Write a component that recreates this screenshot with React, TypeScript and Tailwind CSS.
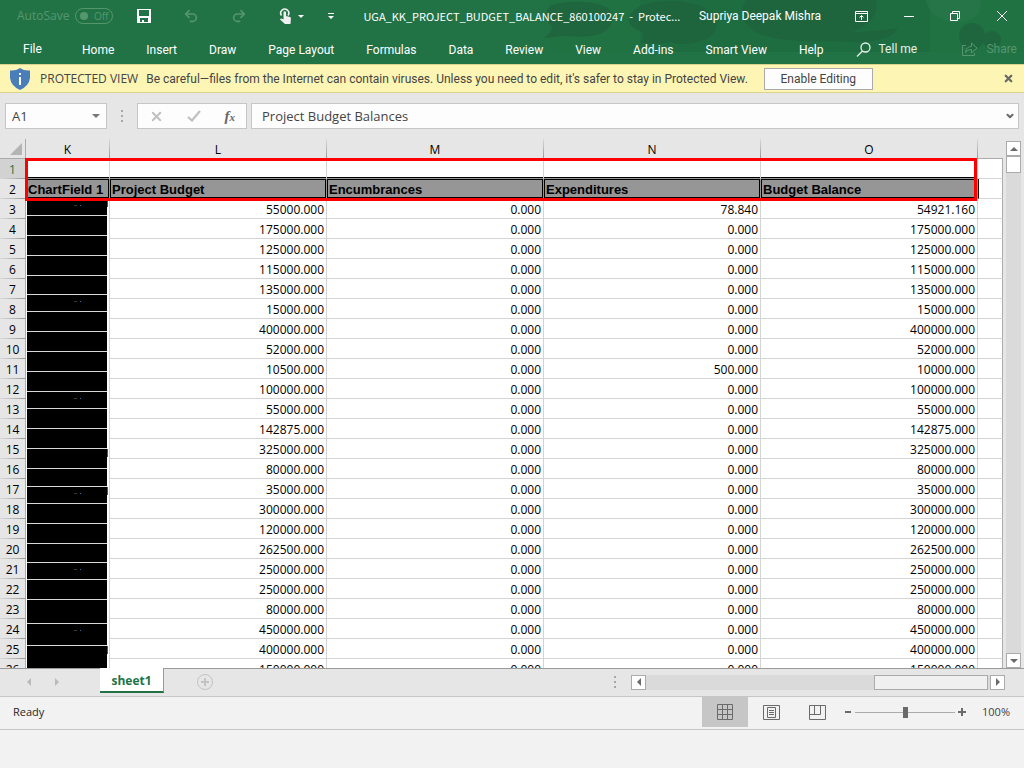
import { ChevronDown, Redo2, Undo2, X } from "lucide-react";

const tabs = [
  "Home",
  "Insert",
  "Draw",
  "Page Layout",
  "Formulas",
  "Data",
  "Review",
  "View",
  "Add-ins",
  "Smart View",
  "Help",
];

const columns = ["K", "L", "M", "N", "O"];
const headings = [
  "ChartField 1",
  "Project Budget",
  "Encumbrances",
  "Expenditures",
  "Budget Balance",
];

// budget, encumbrances, expenditures, balance
const rows = [
  ["55000.000", "0.000", "78.840", "54921.160"],
  ["175000.000", "0.000", "0.000", "175000.000"],
  ["125000.000", "0.000", "0.000", "125000.000"],
  ["115000.000", "0.000", "0.000", "115000.000"],
  ["135000.000", "0.000", "0.000", "135000.000"],
  ["15000.000", "0.000", "0.000", "15000.000"],
  ["400000.000", "0.000", "0.000", "400000.000"],
  ["52000.000", "0.000", "0.000", "52000.000"],
  ["10500.000", "0.000", "500.000", "10000.000"],
  ["100000.000", "0.000", "0.000", "100000.000"],
  ["55000.000", "0.000", "0.000", "55000.000"],
  ["142875.000", "0.000", "0.000", "142875.000"],
  ["325000.000", "0.000", "0.000", "325000.000"],
  ["80000.000", "0.000", "0.000", "80000.000"],
  ["35000.000", "0.000", "0.000", "35000.000"],
  ["300000.000", "0.000", "0.000", "300000.000"],
  ["120000.000", "0.000", "0.000", "120000.000"],
  ["262500.000", "0.000", "0.000", "262500.000"],
  ["250000.000", "0.000", "0.000", "250000.000"],
  ["250000.000", "0.000", "0.000", "250000.000"],
  ["80000.000", "0.000", "0.000", "80000.000"],
  ["450000.000", "0.000", "0.000", "450000.000"],
  ["400000.000", "0.000", "0.000", "400000.000"],
  ["150000.000", "0.000", "0.000", "150000.000"],
];

// heights of the blacked out strips in column K, top to bottom
const redacted = [
  16, 19, 19, 19, 18, 16, 19, 19, 19, 19, 16, 19, 19, 19, 17, 16, 19, 19, 18,
  16, 19, 23, 21, 30,
];
const specked = [0, 5, 10, 15, 19, 22];
// strips whose covered text sticks out on the right
const peeking = [0, 13, 15, 23];

function HeaderArt() {
  return (
    <svg
      className="pointer-events-none absolute top-0 right-0 h-[52px] w-[494px]"
      viewBox="0 0 494 52"
      aria-hidden="true"
    >
      <rect x="20" width="474" height="52" fill="#20703f" opacity="0.35" />
      <rect x="110" width="290" height="52" fill="#1e643d" opacity="0.35" />
      <g fill="#1f623d" opacity="0.7">
        <path d="M20 6c14-6 44-6 58 2 8 8 6 20-8 26-14 4-26 2-36 2-8 0-12 2-20 2 4-4 8-6 8-12C14 20 14 12 20 6z" />
        <path d="M104 10c14-12 56-12 74 0 14 10 10 24-4 30-12 5-24 5-34 2-10 2-22 2-30 0 4-4 4-6 2-10-16-6-16-14-8-22z" />
        <path d="M216 0h130c4 14-8 26-24 32 14 0 32-2 46-4-4 10-22 14-44 14-30-2-60 2-88-6-24-6-28-24-20-36z" />
        <circle cx="442" cy="36" r="13" />
        <circle cx="462" cy="40" r="9" />
      </g>
      <path
        d="M396 0h54c4 10-4 20-20 22s-32-8-34-22z"
        fill="#2a784c"
        opacity="0.6"
      />
    </svg>
  );
}

function SaveIcon() {
  return (
    <svg width="14" height="14" viewBox="0 0 14 14" aria-hidden="true">
      <path
        fillRule="evenodd"
        fill="#fff"
        d="M0 0h14v14H0zM2 1v6h10V1zM3 9v4h2v-2h2v2h4V9z"
      />
    </svg>
  );
}

function TouchIcon() {
  return (
    <svg width="14" height="17" viewBox="0 0 14 17" aria-hidden="true">
      <path
        d="M2.500 7.500a4 4 0 1 1 6.500 0"
        fill="none"
        stroke="#f0f0f0"
        strokeWidth="1.600"
      />
      <path
        fill="#f0f0f0"
        d="M4.500 4.500a1.300 1.300 0 0 1 2.600 0V8l3.900 1q1 .3.900 1.500L11.500 16H6L1 11.500q.5-1.500 2-.8l1.500.8z"
      />
    </svg>
  );
}

function SearchIcon() {
  return (
    <svg
      width="15"
      height="15"
      viewBox="0 0 15 15"
      fill="none"
      stroke="currentColor"
      strokeWidth="1.300"
      aria-hidden="true"
    >
      <circle cx="9.500" cy="5.500" r="4.500" />
      <path d="M6.500 9L1 14.500" />
    </svg>
  );
}

function ShieldIcon() {
  return (
    <svg width="20" height="22" viewBox="0 0 20 22" aria-hidden="true">
      <path
        d="M10 0q4 3 10 2.500V10q-1 8-10 12Q1 18 0 10V2.500Q6 3 10 0z"
        fill="#4a7ebb"
      />
      <path d="M9 5h2v2H9zM9 9h2v8H9z" fill="#fff" />
    </svg>
  );
}

function ShareIcon() {
  return (
    <svg
      width="16"
      height="14"
      viewBox="0 0 16 14"
      fill="none"
      stroke="currentColor"
      aria-hidden="true"
    >
      <path d="M4 3.500H.5v10h12V11" />
      <path d="M3.500 10.500q.5-6 6-6V1l5.500 5-5.500 5V7.500q-4 0-6 3z" />
    </svg>
  );
}

function Triangle({ dir }: { dir: "up" | "down" | "left" | "right" }) {
  const points = {
    up: "0,6 8,6 4,2",
    down: "0,2 8,2 4,6",
    left: "6,0 6,8 2,4",
    right: "2,0 2,8 6,4",
  };
  return (
    <svg width="8" height="8" viewBox="0 0 8 8" aria-hidden="true">
      <polygon points={points[dir]} fill="currentColor" />
    </svg>
  );
}

function Grip() {
  return (
    <div className="flex flex-col gap-[3px]">
      <span className="size-[2px] bg-[#a6a6a6]" />
      <span className="size-[2px] bg-[#a6a6a6]" />
      <span className="size-[2px] bg-[#a6a6a6]" />
    </div>
  );
}

function TitleBar() {
  return (
    <div className="relative flex h-8 items-center pr-4 pl-[17px]">
      <label className="flex items-center gap-[6px] text-[#56966f]">
        AutoSave
        <button
          role="switch"
          aria-checked="false"
          aria-label="AutoSave"
          className="flex h-4 w-[38px] items-center justify-between rounded-full border border-[#56966f] px-1 text-[10px]"
        >
          <span className="size-2 rounded-full bg-[#56966f]" />
          Off
        </button>
      </label>
      <button aria-label="Save" className="ml-6">
        <SaveIcon />
      </button>
      <button aria-label="Undo" className="ml-8 text-[#56966f]">
        <Undo2 size={16} strokeWidth={2.5} />
      </button>
      <button aria-label="Redo" className="ml-8 text-[#56966f]">
        <Redo2 size={16} strokeWidth={2.5} />
      </button>
      <button
        aria-label="Touch mode"
        className="ml-8 flex items-center gap-[5px]"
      >
        <TouchIcon />
        <svg width="6" height="3" viewBox="0 0 6 3">
          <path d="M0 0h6L3 3z" fill="#fff" />
        </svg>
      </button>
      <button aria-label="Customize toolbar" className="ml-6">
        <svg width="6" height="6" viewBox="0 0 6 6">
          <path d="M0 0h6v1H0zM0 3h6L3 6z" fill="#fff" />
        </svg>
      </button>
      <div className="min-w-0 flex-1 pl-[29px] font-['Noto_Sans_CJK_SC','Open_Sans',sans-serif] text-[11px] whitespace-pre">
        UGA_KK_PROJECT_BUDGET_BALANCE_860100247{"  -  "}Protec...
      </div>
      <span className="font-[Roboto,sans-serif] whitespace-nowrap">
        Supriya Deepak Mishra
      </span>
      <button aria-label="Ribbon display options" className="ml-[34px]">
        <svg width="13" height="11" viewBox="0 0 13 11" fill="none" stroke="#fff">
          <path d="M.5.5h12v10H.5zM.5 2.500h12M6.500 9V4.500M4.500 6.500l2-2 2 2" />
        </svg>
      </button>
      <button aria-label="Minimize" className="ml-9">
        <svg width="10" height="10" viewBox="0 0 10 10">
          <path d="M0 5.500h10" stroke="#fff" />
        </svg>
      </button>
      <button aria-label="Restore" className="ml-9">
        <svg width="10" height="10" viewBox="0 0 10 10" fill="none" stroke="#fff">
          <path d="M.5 2.500h7v7h-7zM2.500 2.500v-2h7v7h-2" />
        </svg>
      </button>
      <button aria-label="Close" className="ml-9">
        <svg width="12" height="10" viewBox="0 0 12 10" stroke="#fff">
          <path d="M1 0l10 10M11 0L1 10" />
        </svg>
      </button>
    </div>
  );
}

function Ribbon() {
  return (
    <nav className="relative flex h-8 items-center pt-[2px] pr-[7px] pl-[23px] font-[Roboto,sans-serif] whitespace-nowrap">
      <button className="w-[59px] text-left">File</button>
      <div className="flex gap-8 pt-px">
        {tabs.map((tab) => (
          <button key={tab}>{tab}</button>
        ))}
      </div>
      <button className="ml-8 flex items-center gap-2 text-white/90">
        <SearchIcon />
        Tell me
      </button>
      <button className="ml-auto flex items-center gap-2 text-[#56966f]">
        <ShareIcon />
        Share
      </button>
    </nav>
  );
}

function MessageBar() {
  return (
    <div className="flex h-[29px] items-center border-y border-[#d9d38b] bg-[#fcf5b4] px-[10px] whitespace-nowrap text-[#444]">
      <ShieldIcon />
      <span className="ml-[10px]">PROTECTED VIEW</span>
      <p className="ml-2 font-[Roboto,sans-serif]">
        Be careful—files from the Internet can contain viruses. Unless you need
        to edit, it's safer to stay in Protected View.
      </p>
      <button className="ml-4 h-[22px] w-[109px] border border-[#ababab] bg-[#fdfdfd] font-[Roboto,sans-serif]">
        Enable Editing
      </button>
      <button aria-label="Close message bar" className="ml-auto text-[#6a6a6a]">
        <X size={11} strokeWidth={5} />
      </button>
    </div>
  );
}

function FormulaBar() {
  return (
    <div className="flex h-[46px] items-center gap-1 px-[5px] text-[13px] text-[#444]">
      <div className="flex h-[26px] w-[102px] items-center border border-[#c6c6c6] bg-[#fdfdfd] px-[6px]">
        <input
          aria-label="Name box"
          defaultValue="A1"
          className="min-w-0 flex-1 bg-transparent pt-[2px] outline-none"
        />
        <span className="text-[#777]">
          <Triangle dir="down" />
        </span>
      </div>
      <div className="flex w-[22px] justify-center">
        <Grip />
      </div>
      <div className="flex h-[26px] w-[110px] items-center justify-between border border-[#c6c6c6] bg-[#fdfdfd] px-[11px]">
        <button aria-label="Cancel" className="text-[#c0c0c0]">
          <X size={15} strokeWidth={3} />
        </button>
        <button aria-label="Enter">
          <svg width="14" height="12" viewBox="0 0 14 12" fill="none">
            <path d="M1 7l4 3.500L13 1" stroke="#c0c0c0" strokeWidth="2.200" />
          </svg>
        </button>
        <button
          aria-label="Insert function"
          className="font-['Liberation_Serif',serif] text-[15px] leading-4 font-bold text-[#666] italic"
        >
          f<span className="text-[11px]">x</span>
        </button>
      </div>
      <div className="flex h-[26px] min-w-0 flex-1 items-center border border-[#c6c6c6] bg-[#fdfdfd] pr-[3px] pl-[10px]">
        <input
          aria-label="Formula bar"
          defaultValue="Project Budget Balances"
          className="min-w-0 flex-1 bg-transparent pt-[2px] outline-none"
        />
        <button aria-label="Expand formula bar" className="text-[#6a6a6a]">
          <ChevronDown size={10} strokeWidth={5} />
        </button>
      </div>
    </div>
  );
}

function RowHeader({ n }: { n: number }) {
  return (
    <th
      scope="row"
      className={
        n === 1
          ? "h-5 border-r border-[#217346] bg-[#d2d2d2] p-0 font-normal text-[#217346]"
          : "h-5 border-r border-[#ababab] bg-[#e6e6e6] p-0 font-normal"
      }
    >
      <div className="flex h-5 flex-col">
        <span className="h-[19px] pt-[3px] leading-4">{n}</span>
        <span className="h-px bg-linear-to-r from-[#dadada] to-[#9a9a9a]" />
      </div>
    </th>
  );
}

function Redaction() {
  return (
    <td
      rowSpan={rows.length}
      aria-label="Redacted"
      className="border-r border-[#d4d4d4] p-0 pr-[2px] pl-px align-top"
    >
      <div className="flex flex-col gap-px bg-[#d9d9d9]">
        {redacted.map((height, i) => (
          <div key={i} className="relative bg-black" style={{ height }}>
            {specked.includes(i) && (
              <div className="flex justify-center gap-[3px] pt-[6px] pl-5">
                <span className="h-px w-[3px] bg-[#3a3a26]" />
                <span className="h-px w-px bg-[#2f6ea8]" />
              </div>
            )}
            {peeking.includes(i) && (
              <span className="absolute top-0 left-full h-[8px] w-px bg-[#1f5f9f]" />
            )}
          </div>
        ))}
      </div>
    </td>
  );
}

function Sheet() {
  return (
    <div className="relative min-w-0 flex-1 overflow-hidden">
      <table className="w-full table-fixed border-separate border-spacing-0 text-[12px] text-black">
        <colgroup>
          <col className="w-[26px]" />
          <col className="w-[84px]" />
          <col />
          <col />
          <col />
          <col />
          <col className="w-[25px]" />
        </colgroup>
        <thead>
          <tr className="bg-[#e6e6e6]">
            <td className="h-5 border-r border-b border-[#ababab] p-0">
              <svg width="12" height="12" viewBox="0 0 12 12" className="ml-[10px]">
                <path d="M12 0v12H0z" fill="#b4b4b4" />
              </svg>
            </td>
            {columns.map((col) => (
              <th
                key={col}
                scope="col"
                className="h-5 border-b border-[#ababab] p-0 font-normal"
              >
                <div className="flex h-[19px]">
                  <span className="flex-1 pt-[3px] leading-4">{col}</span>
                  <span className="w-px bg-linear-to-b from-[#dadada] to-[#9a9a9a]" />
                </div>
              </th>
            ))}
            <td className="h-5 border-b border-[#ababab] p-0" />
          </tr>
        </thead>
        <tbody className="bg-white">
          <tr>
            <RowHeader n={1} />
            {columns.map((col) => (
              <td
                key={col}
                className="h-5 border-r border-b border-r-[#d4d4d4] border-b-[#969696] p-0 shadow-[inset_0_-1px_0_#000]"
              />
            ))}
            <td className="h-5 border-r border-b border-r-[#ababab] border-b-[#d4d4d4] p-0" />
          </tr>
          <tr>
            <RowHeader n={2} />
            {headings.map((heading) => (
              <td
                key={heading}
                className="h-5 border-r border-b border-[#969696] bg-[#969696] p-0"
              >
                <div className="h-[19px] overflow-hidden border border-black pl-px font-['Liberation_Sans',sans-serif] text-[13px] leading-[19px] font-bold whitespace-nowrap">
                  {heading}
                </div>
              </td>
            ))}
            <td className="h-5 border-r border-b border-l border-r-[#ababab] border-b-[#d4d4d4] border-l-black p-0" />
          </tr>
          {rows.map((row, i) => (
            <tr key={i}>
              <RowHeader n={i + 3} />
              {i === 0 && <Redaction />}
              {row.map((value, j) => (
                <td
                  key={j}
                  className="h-5 border-r border-b border-[#d4d4d4] p-0 pt-[3px] pr-[2px] text-right leading-4"
                >
                  {value}
                </td>
              ))}
              <td className="h-5 border-r border-b border-r-[#ababab] border-b-[#d4d4d4] p-0" />
            </tr>
          ))}
        </tbody>
      </table>
      {/* highlight round the title and heading rows */}
      <div className="pointer-events-none absolute top-[19px] right-[26px] left-[25px] h-[43px] border-3 border-[#ff0000]" />
    </div>
  );
}

function VerticalScroll() {
  return (
    <div className="flex w-[21px] flex-col items-start pt-[2px] pl-[3px] text-[#6a6a6a]">
      <button
        aria-label="Scroll up"
        className="flex size-[15px] items-center justify-center border border-[#ababab] bg-white"
      >
        <Triangle dir="up" />
      </button>
      <div className="w-[15px] flex-1 bg-[#dadada]">
        <div className="h-[17px] border border-[#ababab] bg-white" />
      </div>
      <button
        aria-label="Scroll down"
        className="flex size-[15px] items-center justify-center border border-[#ababab] bg-white"
      >
        <Triangle dir="down" />
      </button>
    </div>
  );
}

function SheetTabs() {
  return (
    <div className="flex h-7 items-start border-t border-[#9a9a9a]">
      <div className="flex h-[26px] w-[100px] items-center gap-5 pl-[25px] text-[#b9b9b9]">
        <button aria-label="Previous sheet">
          <Triangle dir="left" />
        </button>
        <button aria-label="Next sheet">
          <Triangle dir="right" />
        </button>
      </div>
      <button className="-mt-px h-[25px] w-16 border-r border-b-2 border-r-[#9a9a9a] border-b-[#217346] bg-white pt-[3px] font-bold text-[#217346]">
        sheet1
      </button>
      <button aria-label="New sheet" className="mt-1 ml-8">
        <svg width="18" height="18" viewBox="0 0 18 18" fill="none" stroke="#c3c3c3">
          <circle cx="9" cy="9" r="7.500" />
          <path d="M9 5v8M5 9h8" strokeWidth="2" />
        </svg>
      </button>
      <div className="ml-auto flex h-[26px] items-center pr-[19px] text-[#6a6a6a]">
        <Grip />
        <button
          aria-label="Scroll left"
          className="ml-[15px] flex size-[15px] items-center justify-center border border-[#ababab] bg-white"
        >
          <Triangle dir="left" />
        </button>
        <div className="flex h-[15px] w-[344px] justify-end bg-[#dadada] pr-[2px]">
          <div className="w-[114px] border border-[#ababab] bg-[#f0f0f0]" />
        </div>
        <button
          aria-label="Scroll right"
          className="flex size-[15px] items-center justify-center border border-[#ababab] bg-white"
        >
          <Triangle dir="right" />
        </button>
      </div>
    </div>
  );
}

function StatusBar() {
  return (
    <div className="flex h-[34px] items-start border-y border-[#c6c6c6] bg-[#f2f2f2] pl-[13px] text-[11px] text-[#262626]">
      <span className="leading-[30px]">Ready</span>
      <div className="ml-auto flex h-[30px] items-center text-[#6a6a6a]">
        <button
          aria-label="Normal view"
          className="flex h-[30px] w-[46px] items-center justify-center bg-[#c6c6c6]"
        >
          <svg width="16" height="16" viewBox="0 0 16 16" fill="none" stroke="currentColor">
            <path d="M.5.5h15v15H.5zM5.500.5v15M10.500.5v15M.5 5.500h15M.5 10.500h15" />
          </svg>
        </button>
        <button
          aria-label="Page layout view"
          className="flex w-[46px] justify-center"
        >
          <svg width="17" height="15" viewBox="0 0 17 15" fill="none" stroke="currentColor">
            <path d="M.5.5h16v14H.5zM4.500 2.500h8v10h-8zM6 5.500h5M6 7.500h5M6 9.500h5" />
          </svg>
        </button>
        <button
          aria-label="Page break preview"
          className="flex w-[46px] justify-center"
        >
          <svg width="17" height="15" viewBox="0 0 17 15" fill="none" stroke="currentColor">
            <path d="M.5.5h16v14H.5zM5.500.5v9M11.500.5v9h-11" />
          </svg>
        </button>
        <button aria-label="Zoom out" className="ml-1">
          <svg width="8" height="8" viewBox="0 0 8 8">
            <path d="M1 4h6" stroke="currentColor" strokeWidth="2" />
          </svg>
        </button>
        <input
          type="range"
          aria-label="Zoom"
          min={0}
          max={200}
          defaultValue={100}
          className="mx-[3px] h-3 w-[100px] appearance-none bg-[linear-gradient(#ababab,#ababab)] bg-size-[100%_1px] bg-center bg-no-repeat [&::-webkit-slider-thumb]:h-[11px] [&::-webkit-slider-thumb]:w-[5px] [&::-webkit-slider-thumb]:appearance-none [&::-webkit-slider-thumb]:bg-[#6a6a6a]"
        />
        <button aria-label="Zoom in">
          <svg width="8" height="8" viewBox="0 0 8 8">
            <path d="M0 4h8M4 0v8" stroke="currentColor" strokeWidth="2" />
          </svg>
        </button>
        <button className="w-[58px] pr-[14px] text-right text-[#444]">100%</button>
      </div>
    </div>
  );
}

export default function App() {
  return (
    <div className="flex h-screen flex-col bg-[#e6e6e6] font-['Open_Sans','Noto_Sans',sans-serif] text-[12px]">
      <header className="relative bg-[#217346] text-white">
        <HeaderArt />
        <TitleBar />
        <Ribbon />
      </header>
      <MessageBar />
      <FormulaBar />
      <main className="flex min-h-0 flex-1">
        <Sheet />
        <VerticalScroll />
      </main>
      <SheetTabs />
      <StatusBar />
      <footer className="h-[38px] bg-[#f2f2f2]" />
    </div>
  );
}
